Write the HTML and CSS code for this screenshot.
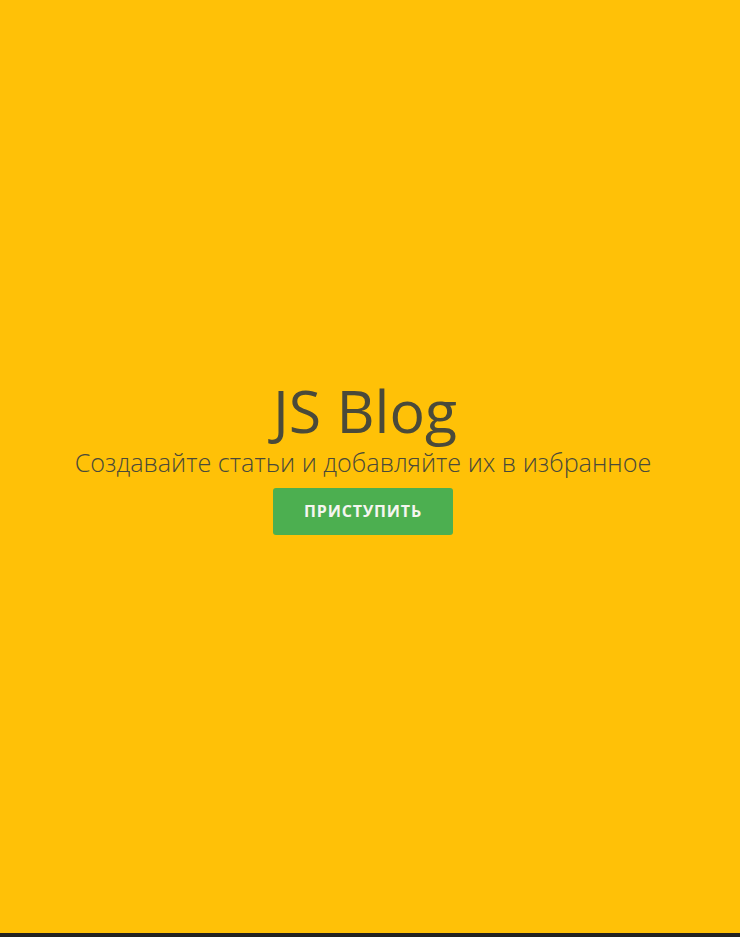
FILE: index.html
```html
<!DOCTYPE html>
<html lang="ru">
<head>
<meta charset="utf-8">
<title>JS Blog</title>
<link rel="stylesheet" href="styles.css">
</head>
<body>
<main class="hero">
  <h1 class="hero__title">JS Blog</h1>
  <p class="hero__subtitle">Создавайте статьи и добавляйте их в избранное</p>
  <button class="hero__btn">Приступить</button>
</main>
<footer class="bottom-bar"></footer>
</body>
</html>
```
FILE: styles.css
```css
* { box-sizing: border-box; }
html, body { margin: 0; padding: 0; height: 100%; }
body {
  background: #ffc107;
  font-family: "Open Sans", "Noto Sans", sans-serif;
  color: #4a4a3a;
  display: flex;
  flex-direction: column;
}
.hero {
  flex: 1;
  display: flex;
  flex-direction: column;
  align-items: center;
  justify-content: center;
  padding: 0 14px 23px 0;
}
.hero__title {
  margin: 0 0 0 4px;
  font-size: 59px;
  font-weight: 400;
  line-height: 1.2;
}
.hero__subtitle {
  margin: 1px 0 0;
  font-size: 25.2px;
  font-weight: 300;
  line-height: 1.2;
}
.hero__btn {
  margin-top: 10px;
  width: 180px;
  height: 47px;
  border: none;
  border-radius: 3px;
  background: #4caf50;
  color: #f5f5f0;
  font-family: "Open Sans", sans-serif;
  font-weight: 700;
  font-size: 16px;
  letter-spacing: 0.8px;
  text-transform: uppercase;
}
.bottom-bar {
  height: 4px;
  background: #222;
}
```
